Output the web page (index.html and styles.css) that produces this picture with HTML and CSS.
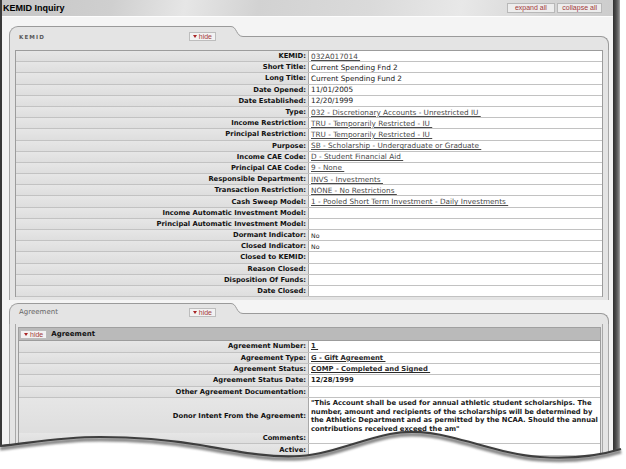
FILE: index.html
```html
<!DOCTYPE html>
<html>
<head>
<meta charset="utf-8">
<link rel="stylesheet" href="styles.css">
</head>
<body>
<div class="frame">
  <div class="sheet">
    <div class="topbar">
      <div class="title">KEMID Inquiry</div>
      <div class="topbtns"><span class="btn b1">expand all</span><span class="btn b2">collapse all</span></div>
    </div>

    <section class="panel p1">
      <div class="tabrow">
        <div class="tab"><span class="tabtitle caps">KEMID</span><span class="hide"><i class="tri"></i>hide</span></div>
        <svg class="curve" width="12" height="24" viewBox="0 0 12 24"><path d="M0,0.5 C6,0.5 5,10.5 12,10.5 L12,24 L0,24 Z" fill="#e4e4e4"/><path d="M0,0.5 C6,0.5 5,10.5 12,10.5" fill="none" stroke="#9a9a9a" stroke-width="1"/></svg>
        <div class="tabline"></div>
      </div>
      <div class="pbody">
        <div class="rows">
          <div class="row"><div class="lbl">KEMID:</div><div class="val"><a>032A017014&nbsp;</a></div></div>
          <div class="row"><div class="lbl">Short Title:</div><div class="val">Current Spending Fnd 2</div></div>
          <div class="row"><div class="lbl">Long Title:</div><div class="val">Current Spending Fund 2</div></div>
          <div class="row"><div class="lbl">Date Opened:</div><div class="val">11/01/2005</div></div>
          <div class="row"><div class="lbl">Date Established:</div><div class="val">12/20/1999</div></div>
          <div class="row"><div class="lbl">Type:</div><div class="val"><a>032 - Discretionary Accounts - Unrestricted IU&nbsp;</a></div></div>
          <div class="row"><div class="lbl">Income Restriction:</div><div class="val"><a>TRU - Temporarily Restricted - IU&nbsp;</a></div></div>
          <div class="row"><div class="lbl">Principal Restriction:</div><div class="val"><a>TRU - Temporarily Restricted - IU&nbsp;</a></div></div>
          <div class="row"><div class="lbl">Purpose:</div><div class="val"><a>SB - Scholarship - Undergraduate or Graduate&nbsp;</a></div></div>
          <div class="row"><div class="lbl">Income CAE Code:</div><div class="val"><a>D - Student Financial Aid&nbsp;</a></div></div>
          <div class="row"><div class="lbl">Principal CAE Code:</div><div class="val"><a>9 - None&nbsp;</a></div></div>
          <div class="row"><div class="lbl">Responsible Department:</div><div class="val"><a>INVS - Investments&nbsp;</a></div></div>
          <div class="row"><div class="lbl">Transaction Restriction:</div><div class="val"><a>NONE - No Restrictions&nbsp;</a></div></div>
          <div class="row"><div class="lbl">Cash Sweep Model:</div><div class="val"><a>1 - Pooled Short Term Investment - Daily Investments&nbsp;</a></div></div>
          <div class="row"><div class="lbl">Income Automatic Investment Model:</div><div class="val"></div></div>
          <div class="row"><div class="lbl">Principal Automatic Investment Model:</div><div class="val"></div></div>
          <div class="row"><div class="lbl">Dormant Indicator:</div><div class="val small">No</div></div>
          <div class="row"><div class="lbl">Closed Indicator:</div><div class="val small">No</div></div>
          <div class="row"><div class="lbl">Closed to KEMID:</div><div class="val"></div></div>
          <div class="row"><div class="lbl">Reason Closed:</div><div class="val"></div></div>
          <div class="row"><div class="lbl">Disposition Of Funds:</div><div class="val"></div></div>
          <div class="row"><div class="lbl">Date Closed:</div><div class="val"></div></div>
        </div>
      </div>
    </section>

    <section class="panel p2">
      <div class="tabrow">
        <div class="tab"><span class="tabtitle">Agreement</span><span class="hide"><i class="tri"></i>hide</span></div>
        <svg class="curve" width="12" height="21" viewBox="0 0 12 21"><path d="M0,0.5 C6,0.5 5,10.5 12,10.5 L12,21 L0,21 Z" fill="#e4e4e4"/><path d="M0,0.5 C6,0.5 5,10.5 12,10.5" fill="none" stroke="#9a9a9a" stroke-width="1"/></svg>
        <div class="tabline"></div>
      </div>
      <div class="pbody">
        <div class="subbox">
          <div class="subhead"><span class="hide"><i class="tri"></i>hide</span><span class="subtitle">Agreement</span></div>
          <div class="rows bold">
            <div class="row"><div class="lbl">Agreement Number:</div><div class="val"><a>1&nbsp;</a></div></div>
            <div class="row"><div class="lbl">Agreement Type:</div><div class="val"><a>G - Gift Agreement&nbsp;</a></div></div>
            <div class="row"><div class="lbl">Agreement Status:</div><div class="val"><a>COMP - Completed and Signed&nbsp;</a></div></div>
            <div class="row"><div class="lbl">Agreement Status Date:</div><div class="val">12/28/1999</div></div>
            <div class="row"><div class="lbl">Other Agreement Documentation:</div><div class="val"></div></div>
            <div class="row tall"><div class="lbl">Donor Intent From the Agreement:</div><div class="val para">"This Account shall be used for annual athletic student scholarships. The<br>number, amount and recipients of the scholarships will be determined by<br>the Athletic Department and as permitted by the NCAA. Should the annual<br>contributions received exceed the am"</div></div>
            <div class="row"><div class="lbl">Comments:</div><div class="val"></div></div>
            <div class="row"><div class="lbl">Active:</div><div class="val"></div></div>
            <div class="row"><div class="lbl">&nbsp;</div><div class="val"></div></div>
          </div>
        </div>
      </div>
    </section>
  </div>
  <div class="shade"></div>
</div>

<svg class="tear" width="626" height="469" viewBox="0 0 626 469">
  <defs><filter id="bl" x="-5%" y="-50%" width="110%" height="200%"><feGaussianBlur stdDeviation="1.2"/></filter></defs>
  <path d="M0,446 C30,443 60,437 100,437 C140,437 170,440 200,445 C240,452 270,458 300,456 C330,454 360,440 390,434 C410,430 430,432 450,437 C480,444 510,455 540,457 C570,459 595,457 621,449 L626,449 L626,469 L0,469 Z" fill="#fff"/>
  <path d="M0,446 C30,443 60,437 100,437 C140,437 170,440 200,445 C240,452 270,458 300,456 C330,454 360,440 390,434 C410,430 430,432 450,437 C480,444 510,455 540,457 C570,459 595,457 621,449" fill="none" stroke="#8a8a8a" stroke-width="4" transform="translate(0,2.5)" filter="url(#bl)"/>
  <path d="M0,446 C30,443 60,437 100,437 C140,437 170,440 200,445 C240,452 270,458 300,456 C330,454 360,440 390,434 C410,430 430,432 450,437 C480,444 510,455 540,457 C570,459 595,457 621,449" fill="none" stroke="#3e3e3e" stroke-width="2.2"/>
</svg>
</body>
</html>
```

FILE: styles.css
```css
* { box-sizing: border-box; margin: 0; padding: 0; }
body {
  margin: 0;
  width: 626px;
  height: 469px;
  overflow: hidden;
  position: relative;
  background: #fff;
  font-family: "DejaVu Sans", Verdana, sans-serif;
  color: #1a1a1a;
}
.frame { display: flex; height: 469px; width: 620px; }
.sheet {
  width: 613px;
  height: 469px;
  border-left: 2px solid #3a3a3a;
  background: #f4f4f4;
  display: flex;
  flex-direction: column;
  overflow: hidden;
}
.shade {
  width: 7px;
  background: linear-gradient(to right, #2f2f2f, #4a4a4a 40%, #707070 75%, #a8a8a8);
}
.topbar {
  height: 17px;
  flex: none;
  display: flex;
  align-items: center;
  justify-content: space-between;
  padding: 0 11px 0 1px;
  background: linear-gradient(100deg, #c6c6c6 0%, #cfcfcf 18%, #e6e6e6 30%, #d2d2d2 42%, #dadada 60%, #e8e8e8 75%, #d4d4d4 90%, #cdcdcd 100%);
  border-bottom: 1px solid #fdfdfd;
}
.title { font: bold 9px "Liberation Sans", Arial, sans-serif; color: #000; }
.topbtns { display: flex; gap: 2.5px; }
.btn {
  font: 7px "Liberation Sans", Arial, sans-serif;
  color: #a33a3a;
  background: #ededed;
  border: 1px solid #b8b8b8;
  height: 10px;
  line-height: 8px;
  padding: 0 7px;
}
.btn.b2 { padding: 0 4px; }

.panel { margin: 9px 4px 0 7px; flex: none; }
.p2 { margin-top: 3px; }
.tabrow { display: flex; height: 24px; }
.p2 .tabrow { height: 21px; }
.tab {
  width: 222px;
  background: #e4e4e4;
  border-top: 1px solid #9a9a9a;
  border-left: 1px solid #9a9a9a;
  border-top-left-radius: 9px;
  display: flex;
  justify-content: space-between;
  align-items: flex-start;
  padding: 5px 15px 0 9px;
}
.p2 .tab { padding-top: 4px; }
.curve { display: block; flex: none; }
.tabline {
  flex: 1;
  margin-top: 10px;
  background: #e4e4e4;
  border-top: 1px solid #9a9a9a;
  border-right: 1px solid #9a9a9a;
  border-top-right-radius: 8px;
}
.tabtitle { font: 7px "DejaVu Sans", Verdana, sans-serif; color: #666; line-height: 8px; }
.tabtitle.caps { font-weight: bold; font-size: 5.6px; letter-spacing: 1.1px; color: #5a5a5a; margin-top: 1px; }
.hide {
  display: inline-flex;
  align-items: center;
  gap: 2px;
  height: 9px;
  padding: 0 3px 0 3px;
  background: #f2f2f2;
  border: 1px solid #bdbdbd;
  font: 7px "Liberation Sans", Arial, sans-serif;
  line-height: 7px;
  color: #a33a3a;
}
.tri {
  display: block;
  width: 0; height: 0;
  border-left: 2.5px solid transparent;
  border-right: 2.5px solid transparent;
  border-top: 3px solid #a82424;
}
.pbody {
  background: #e4e4e4;
  border-left: 1px solid #a8a8a8;
  border-right: 1px solid #a8a8a8;
  padding: 0 5px 3px 5px;
}
.rows {
  border: 1px solid #9c9c9c;
  border-bottom: none;
  background: #e2e2e2;
}
.row {
  display: grid;
  grid-template-columns: 292px 1fr;
  height: 11.2px;
  border-bottom: 1px solid #c2c2c2;
}
.lbl {
  font-weight: bold;
  font-size: 6.8px;
  padding-right: 2px;
  display: flex;
  align-items: center;
  justify-content: flex-end;
  white-space: nowrap;
  color: #111;
  background: linear-gradient(#e6e6e6, #dedede);
}
.val {
  background: #fff;
  border-left: 1px solid #a8a8a8;
  font-size: 7.3px;
  padding-left: 2px;
  display: flex;
  align-items: center;
  white-space: nowrap;
  color: #1a1a1a;
}
.val.small { font-size: 6.2px; }
.val a { color: #4a4a4a; text-decoration: underline; }

.subbox {
  border-left: 1px solid #a8a8a8;
  border-right: 1px solid #a8a8a8;
  padding: 3px 1px 0 2px;
}
.subhead {
  height: 13px;
  background: #bababa;
  border: 1px solid #a0a0a0;
  border-bottom: none;
  display: flex;
  align-items: center;
  gap: 4px;
  padding-left: 1px;
}
.subtitle { font: bold 7px "DejaVu Sans", Verdana, sans-serif; color: #111; }
.bold .row { grid-template-columns: 289px 1fr; height: 11.4px; }
.bold .val { font-weight: bold; font-size: 6.8px; }
.bold .val a { color: #2a2a2a; }
.bold .row.tall { height: 35px; }
.val.para { white-space: normal; line-height: 8.5px; padding-top: 1px; }

.tear { position: absolute; left: 0; top: 0; pointer-events: none; }
```
